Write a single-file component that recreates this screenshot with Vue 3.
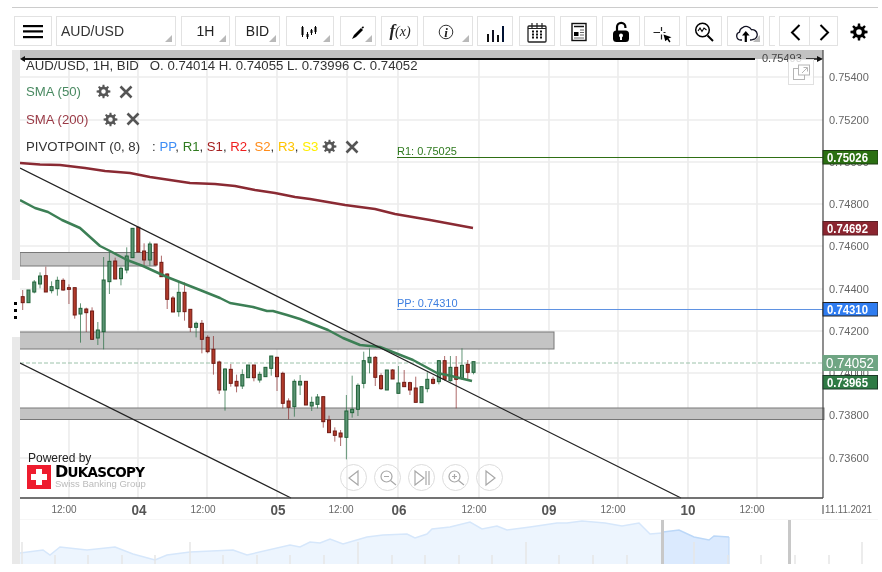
<script setup>
function gear(cx, cy, R, r, hole, teeth = 8) {
  let d = ''
  const step = (Math.PI * 2) / teeth
  for (let i = 0; i < teeth; i++) {
    const a = i * step
    const pts = [
      [a - step * 0.3, r],
      [a - step * 0.17, R],
      [a + step * 0.17, R],
      [a + step * 0.3, r]
    ]
    for (const [an, ra] of pts) {
      d += (d ? 'L' : 'M') + (cx + ra * Math.cos(an)).toFixed(2) + ' ' + (cy + ra * Math.sin(an)).toFixed(2)
    }
  }
  d += 'Z'
  d += `M${cx - hole} ${cy}a${hole} ${hole} 0 1 0 ${hole * 2} 0a${hole} ${hole} 0 1 0 ${-hole * 2} 0Z`
  return d
}
const gearIcon = gear(8, 8, 7.4, 5.2, 2.4)
const gearBig = gear(12, 13, 8.6, 6, 2.8)

const buttons = [
  { k: 'menu', w: 38, m: 0 },
  { k: 'sym', w: 120, m: 4, text: 'AUD/USD', drop: true },
  { k: 'tf', w: 49, m: 5, text: '1H', drop: true },
  { k: 'tf', w: 45, m: 5, text: 'BID', drop: true },
  { k: 'candles', w: 48, m: 6, drop: true },
  { k: 'pen', w: 36, m: 6, drop: true },
  { k: 'fx', w: 37, m: 5 },
  { k: 'info', w: 50, m: 5, drop: true },
  { k: 'bars', w: 36, m: 4 },
  { k: 'cal', w: 36, m: 6 },
  { k: 'news', w: 37, m: 5 },
  { k: 'lock', w: 38, m: 5 },
  { k: 'cross', w: 36, m: 4 },
  { k: 'search', w: 36, m: 6 },
  { k: 'cloud', w: 37, m: 5, drop: true },
  { k: 'stub', w: 6, m: 5 },
  { k: 'prev', w: 31, m: 4 },
  { k: 'next', w: 29, m: -1 }
]
const btnStyle = (b) => ({ width: b.w + 'px', marginLeft: b.m + 'px' })

const grid = [69, 138, 207, 277, 347, 398, 479, 549, 618, 688, 757]
const prices = [
  ['0.75400', 77], ['0.75200', 120], ['0.75000', 162], ['0.74800', 204], ['0.74600', 246],
  ['0.74400', 289], ['0.74200', 331], ['0.74000', 373], ['0.73800', 415], ['0.73600', 458]
]
const hours = [64, 203, 341, 474, 613, 752]
const days = [['04', 139], ['05', 278], ['06', 399], ['09', 549], ['10', 688]]

const groups = [
  [220, ['r 210 230 248 270', 'g 210 210 248 248', 'g 180 186 216 220', 'g 157 168 192 205', 'r 140 167 216 216', 'g 184 200 212 220', 'g 170 181 206 227', 'r 175 181 210 212', 'r 193 203 208 252', 'r 203 203 285 296', 'g 250 265 282 368', 'r 263 267 278 336', 'r 262 273 358 358', 'g 306 330 354 375', 'g 111 180 335 388', 'g 96 124 185 222', 'r 113 123 177 177', 'g 140 145 176 196', 'g 82 108 150 160', 'g 25 25 113 113', 'r 20 22 96 96', 'r 70 93 120 136', 'g 65 72 120 137', 'r 72 72 135 135', 'r 107 127 170 170', 'r 160 162 238 267', 'r 228 234 276 276', 'g 185 217 275 290', 'r 187 217 275 302', 'r 268 268 322 336', 'g 305 310 322 352', 'r 300 310 358 400', 'r 346 352 395 400', 'r 348 388 430 464', 'r 422 426 510 522', 'g 445 447 510 572', 'r 432 448 490 500', 'r 464 484 498 517', 'g 448 464 498 507', 'g 435 435 473 473', 'r 435 435 473 484']],
  [340, ['g 95 103 120 128', 'g 82 82 110 110', 'g 48 48 85 107', 'r 50 52 110 153', 'r 95 100 190 205', 'r 175 183 202 238', 'g 118 124 200 230', 'g 105 124 135 165', 'r 124 124 195 195', 'g 170 187 198 213', 'g 162 171 193 205', 'r 170 170 245 263', 'r 227 240 278 278', 'r 262 273 286 305', 'r 270 279 291 318', 'g 165 213 292 358', 'g 107 208 218 233', 'g 130 136 208 228', 'g 35 62 130 145', 'g 25 52 67 100', 'r 48 52 112 138', 'r 100 107 146 150', 'g 90 90 150 150', 'r 87 90 117 117', 'g 78 129 160 160', 'r 90 127 140 140', 'r 125 128 150 165', 'r 110 144 187 187', 'g 140 140 188 188', 'g 97 118 146 157', 'r 110 118 130 133', 'g 60 62 125 133', 'r 48 62 118 122', 'g 48 82 122 125', 'r 48 82 118 205', 'g 25 76 115 120', 'r 60 73 97 122', 'g 65 65 97 103']]
]
const candles = []
for (const [y0, rows] of groups) {
  for (const row of rows) {
    const [c, a, b, d, e] = row.split(' ')
    const n = candles.length
    candles.push({
      id: n,
      x: +(22.7 + 5.78 * n).toFixed(2),
      c,
      wt: y0 + a / 3,
      bt: y0 + b / 3,
      h: Math.max((d - b) / 3, 1),
      wb: y0 + e / 3
    })
  }
}

const sma50 = '20,200 35,208 48,212 62,220 80,228 100,246 110,251 127,260 143,266 167,277 200,290 220,298 230,303 253,307 267,311 273,311 287,315 300,319 328,330 343,338 360,345 380,347 413,360 437,373 447,375 472,381'
const sma200 = '20,163 40,164.500 60,165 85,168 105,171 130,173 150,177 170,180 190,183 215,184 235,186 255,190 275,193 295,197 310,199 345,205 375,209 395,214 430,220 473,228'

const navA = '20,553 43,550 50,555 60,547 87,550 115,547 133,554 155,560 167,555 190,552 233,550 247,555 290,545 300,547 310,542 320,543 330,539 343,544 367,537 383,535 407,534 415,538 427,534 432,529 450,527 470,522 482,529 497,526 507,530 530,527 557,523 567,523 582,521 605,523 622,526 639,523 650,534 662,533'
const navB = '663,532 679,530 694,537 709,540 714,536 729,537'
const volTicks = [
  [55, 555], [88, 555], [122, 555], [155, 555], [190, 542], [223, 555], [257, 555], [290, 555], [324, 555], [358, 542],
  [392, 555], [425, 555], [459, 555], [492, 555], [526, 542], [559, 555], [593, 555], [627, 555], [694, 542], [728, 555],
  [761, 555], [795, 555], [829, 555], [862, 542], [22, 542]
]
const series = [
  ['PP', 'pp'], ['R1', 'r1'], ['S1', 's1'], ['R2', 'r2'], ['S2', 's2'], ['R3', 'r3'], ['S3', 's3']
]
</script>

<template>
  <div class="page">
    <div class="topline"></div>
    <div class="toolbar">
      <div v-for="(b, i) in buttons" :key="i" class="btn" :class="{ drop: b.drop, noleft: b.k === 'next', sym: b.k === 'sym', stub: b.k === 'stub' }" :style="btnStyle(b)">
        <span v-if="b.text">{{ b.text }}</span>
        <svg v-else-if="b.k !== 'stub'" class="ico" viewBox="0 0 24 24" width="24" height="24">
          <g v-if="b.k === 'menu'" fill="#000">
            <rect x="2" y="6" width="20" height="2.2" />
            <rect x="2" y="11.3" width="20" height="2.2" />
            <rect x="2" y="17" width="20" height="2.2" />
          </g>
          <g v-else-if="b.k === 'candles'" stroke="#000" fill="#000">
            <path d="M4.500 7v11M9.500 13v7M13.500 10v6M17.500 7v8" stroke-width="1" />
            <rect x="3.500" y="8" width="2" height="8" stroke="none" />
            <rect x="8.500" y="15" width="2" height="3" stroke="none" />
            <rect x="12.500" y="11" width="2" height="3" stroke="none" />
            <rect x="16.500" y="8" width="2" height="5" stroke="none" />
          </g>
          <g v-else-if="b.k === 'pen'">
            <path d="M6 20l2-4 7-7 2 2-7 7z" fill="#000" />
            <path d="M15.500 8.500l1.500-1.200 1 1-1.200 1.500z" fill="#000" />
          </g>
          <text v-else-if="b.k === 'fx'" x="12" y="17" class="fx"><tspan class="fxf">f</tspan>(x)</text>
          <g v-else-if="b.k === 'info'">
            <circle cx="10" cy="13" r="6.800" fill="none" stroke="#333" stroke-width="1" />
            <text x="10" y="17.500" class="ii">i</text>
          </g>
          <g v-else-if="b.k === 'bars'">
            <rect x="4" y="15" width="2" height="8" fill="#111" />
            <rect x="9" y="11" width="2" height="12" fill="#112" />
            <rect x="14" y="16" width="2" height="7" fill="#111" />
            <rect x="19" y="7" width="2" height="16" fill="#013" />
          </g>
          <g v-else-if="b.k === 'cal'">
            <rect x="3" y="7" width="18" height="16" rx="1" fill="#fff" stroke="#222" stroke-width="1.300" />
            <path d="M3 9.500h18" stroke="#222" />
            <path d="M7 4v5M12 4v5M17 4v5" stroke="#222" stroke-width="1.200" />
            <path d="M7 12.500h10M7 15.500h10M7 18.500h10" stroke="#111" stroke-width="1.800" stroke-dasharray="2 2" />
          </g>
          <g v-else-if="b.k === 'news'">
            <rect x="5" y="4.500" width="14" height="17" fill="#fff" stroke="#111" stroke-width="1.400" />
            <path d="M7 7.500h10" stroke="#111" stroke-width="1.500" />
            <rect x="7" y="13" width="4.500" height="4" fill="#000" />
            <path d="M13 11h4M13 13.500h4M13 16h4M7 19h10" stroke="#666" stroke-width="1" />
          </g>
          <g v-else-if="b.k === 'lock'">
            <path d="M8 12V8a4.200 4.200 0 0 1 8.400 0v1" fill="none" stroke="#000" stroke-width="2.200" />
            <rect x="4" y="11.500" width="16" height="11.500" rx="3.500" fill="#000" />
            <circle cx="12" cy="16.500" r="2" fill="#fff" />
            <rect x="11" y="17" width="2" height="4" fill="#fff" />
          </g>
          <g v-else-if="b.k === 'cross'">
            <path d="M3.500 13.500h6.500M13.500 13.500h2M11.500 8v4M11.500 15.500v5" stroke="#222" stroke-width="1.200" fill="none" />
            <path d="M13.500 15.500l8 2.800-3 1.300 2 3-1.200.8-2-3-2 1.800z" fill="#000" />
          </g>
          <g v-else-if="b.k === 'search'" fill="none" stroke="#000">
            <circle cx="10.500" cy="11" r="6.800" stroke-width="1.500" />
            <path d="M15.500 16.500l5.500 5.500" stroke-width="2" />
            <path d="M6 12l2-3 2 3.500 2-3.500 2.500 2" stroke-width="1.100" />
          </g>
          <g v-else-if="b.k === 'cloud'">
            <path d="M8 21H6.500a4 4 0 0 1-1-7.800 5.500 5.500 0 0 1 3-4.500 6 6 0 0 1 9 2 4.800 4.800 0 0 1 1.500 9.800c-.8.400-1.800.500-3 .500" fill="none" stroke="#112" stroke-width="1.300" />
            <path d="M11.800 23v-8" stroke="#000" stroke-width="2.200" />
            <path d="M8 16.500l3.800-4.500 3.800 4.500z" fill="#000" />
          </g>
          <path v-else-if="b.k === 'prev'" d="M16.500 6L9 13.500 16.500 21" fill="none" stroke="#000" stroke-width="2" />
          <path v-else-if="b.k === 'next'" d="M8.500 6L16 13.500 8.500 21" fill="none" stroke="#000" stroke-width="2" />
        </svg>
      </div>
      <svg class="settings" viewBox="0 0 24 24" width="24" height="24"><path :d="gearBig" fill="#000" fill-rule="evenodd" /></svg>
    </div>

    <div class="workspace">
      <div class="strip">
        <div class="strip-seg"></div>
        <div class="dots"><i></i><i></i><i></i></div>
      </div>
      <div class="stage">
        <svg class="chart" viewBox="20 50 858 470" width="858" height="470">
          <g stroke="#ececec" stroke-width="1.600">
            <line v-for="x in grid" :key="x" :x1="x" :x2="x" y1="50" y2="498" />
            <line v-for="p in prices" :key="p[0]" x1="20" x2="823" :y1="p[1]" :y2="p[1]" />
          </g>

          <rect x="20" y="50" width="803" height="9" fill="#c2c2c2" />
          <rect x="20" y="252.500" width="136" height="13.500" class="zone" />
          <rect x="19" y="332" width="535" height="17" class="zone" />
          <rect x="19" y="408" width="805" height="11.500" class="zone" />

          <line x1="20" x2="823" y1="363" y2="363" stroke="#9cc2aa" stroke-dasharray="4 2" />

          <g class="candles">
            <g v-for="k in candles" :key="k.id" :class="k.c === 'g' ? 'up' : 'down'">
              <line :x1="k.x" :x2="k.x" :y1="k.wt" :y2="k.wb" class="wick" />
              <rect :x="k.x - 1.5" :y="k.bt" width="3" :height="k.h" class="body" />
            </g>
          </g>

          <polyline :points="sma200" class="ma" stroke="#8a2a33" />
          <polyline :points="sma50" class="ma" stroke="#3c7f55" />
          <line x1="20" y1="168" x2="681" y2="498" class="trend" />
          <line x1="20" y1="363" x2="291" y2="498" class="trend" />

          <line x1="397" x2="823" y1="157.500" y2="157.500" stroke="#2f6f14" stroke-width="1" />
          <line x1="397" x2="823" y1="309.500" y2="309.500" stroke="#5f92e2" stroke-width="1" />
          <text x="397" y="155" class="lvl r1t">R1: 0.75025</text>
          <text x="397" y="307" class="lvl ppt">PP: 0.74310</text>

          <line x1="22" x2="755" y1="59" y2="59" stroke="#111" stroke-width="2" />
          <path d="M20 59l5-3v6z" fill="#111" />
          <text x="762" y="62" class="tl top">0.75493</text>
          <line x1="806" x2="818" y1="59" y2="59" stroke="#111" stroke-width="1.500" />
          <path d="M823 59l-6-3v6z" fill="#111" />

          <rect x="788.500" y="59.500" width="25" height="25" fill="#fff" fill-opacity=".8" stroke="#e0e0e0" />
          <g fill="#fff" stroke="#b5b5b5">
            <rect x="793.500" y="68.500" width="11" height="11" />
            <rect x="798.500" y="65" width="11" height="10" />
          </g>
          <path d="M802 73l5-5M803.500 67.500h4v4" fill="none" stroke="#b5b5b5" />

          <line x1="823" x2="823" y1="50" y2="498" stroke="#444" stroke-width="1.200" />
          <line x1="20" x2="823" y1="498" y2="498" stroke="#444" stroke-width="1.400" />
          <line x1="20" x2="878" y1="520" y2="520" stroke="#ececec" />
          <line x1="823" x2="878" y1="49.500" y2="49.500" stroke="#ddd" />

          <text v-for="p in prices" :key="'t' + p[0]" x="829" :y="p[1] + 4" class="tl">{{ p[0] }}</text>

          <g class="mark">
            <rect x="823" y="150.500" width="55" height="13.500" fill="#2b6f12" stroke="#1d3a12" />
            <text x="827" y="161.500" textLength="41" lengthAdjust="spacingAndGlyphs">0.75026</text>
            <rect x="823" y="221.500" width="55" height="13.500" fill="#8b2530" stroke="#5a2026" />
            <text x="827" y="232.500" textLength="41" lengthAdjust="spacingAndGlyphs">0.74692</text>
            <rect x="823" y="302.500" width="55" height="13.500" fill="#2f7cf0" stroke="#222" />
            <text x="827" y="313.500" textLength="41" lengthAdjust="spacingAndGlyphs">0.74310</text>
            <rect x="822.500" y="355" width="55.500" height="16" fill="#6fa583" />
            <text x="826" y="368" class="big" textLength="48" lengthAdjust="spacingAndGlyphs">0.74052</text>
            <rect x="823" y="375.500" width="54.500" height="13.500" fill="#2f7a45" stroke="#1d3a28" />
            <text x="827" y="386.500" textLength="41" lengthAdjust="spacingAndGlyphs">0.73965</text>
          </g>

          <text v-for="h in hours" :key="h" :x="h" y="513" class="hr">12:00</text>
          <text v-for="d in days" :key="d[0]" :x="d[1]" y="514.500" class="day" textLength="15" lengthAdjust="spacingAndGlyphs">{{ d[0] }}</text>
          <line x1="823" x2="823" y1="505" y2="514" stroke="#444" />
          <text x="825" y="513" class="date" textLength="47" lengthAdjust="spacingAndGlyphs">11.11.2021</text>
        </svg>

        <div class="legend">
          <div class="row first">
            <span>AUD/USD, 1H, BID</span><span class="ohlc">O. 0.74014 H. 0.74055 L. 0.73996 C. 0.74052</span>
          </div>
          <div class="row sma50">
            <span>SMA (50)</span>
            <svg class="g1" viewBox="0 0 16 16" width="15" height="15"><path :d="gearIcon" fill-rule="evenodd" /></svg>
            <svg class="x1" viewBox="0 0 14 14" width="14" height="14"><path d="M1.500 1.500l11 11M12.500 1.500l-11 11" /></svg>
          </div>
          <div class="row sma200">
            <span>SMA (200)</span>
            <svg class="g1" viewBox="0 0 16 16" width="15" height="15"><path :d="gearIcon" fill-rule="evenodd" /></svg>
            <svg class="x1" viewBox="0 0 14 14" width="14" height="14"><path d="M1.500 1.500l11 11M12.500 1.500l-11 11" /></svg>
          </div>
          <div class="row pivot">
            <span>PIVOTPOINT (0, 8)</span>
            <span class="pts">: <template v-for="(s, i) in series" :key="s[0]"><span :class="s[1]">{{ s[0] }}</span><template v-if="i < 6">, </template></template></span>
            <svg class="g2" viewBox="0 0 16 16" width="15" height="15"><path :d="gearIcon" fill-rule="evenodd" /></svg>
            <svg class="x1" viewBox="0 0 14 14" width="14" height="14"><path d="M1.500 1.500l11 11M12.500 1.500l-11 11" /></svg>
          </div>
        </div>

        <div class="brand">
          <div class="powered">Powered by</div>
          <div class="logo">
            <div class="flag"><i></i><b></b></div>
            <div class="wordmark">
              <div class="duka"><span class="bigd">D</span>UKASCOPY</div>
              <div class="swiss">Swiss Banking Group</div>
            </div>
          </div>
        </div>

        <div class="controls">
          <div class="round"><svg viewBox="0 0 24 24" width="24" height="24"><path d="M16 5v14L7 12z" /></svg></div>
          <div class="round"><svg viewBox="0 0 24 24" width="24" height="24"><circle cx="10.500" cy="10.500" r="5.500" /><path d="M8 10.500h5M14.500 14.500l5.500 4.500" /></svg></div>
          <div class="round"><svg viewBox="0 0 24 24" width="24" height="24"><path d="M5 5v14l9-7zM16 5v14M19 5v14" /></svg></div>
          <div class="round"><svg viewBox="0 0 24 24" width="24" height="24"><circle cx="10.500" cy="10.500" r="5.500" /><path d="M8 10.500h5M10.500 8v5M14.500 14.500l5.500 4.500" /></svg></div>
          <div class="round"><svg viewBox="0 0 24 24" width="24" height="24"><path d="M8 5v14l9-7z" /></svg></div>
        </div>

        <svg class="nav" viewBox="20 520 858 44" width="858" height="44">
          <polygon :points="navA + ' 662,564 20,564'" fill="#edf5fe" />
          <polyline :points="navA" fill="none" stroke="#d6e7fb" stroke-width="1.500" />
          <polygon :points="navB + ' 729,564 663,564'" fill="#dbeafe" />
          <polyline :points="navB" fill="none" stroke="#bcd8f8" stroke-width="1.500" />
          <line x1="729" x2="729" y1="537" y2="564" stroke="#bcd8f8" />
          <line v-for="t in volTicks" :key="t[0]" :x1="t[0]" :x2="t[0]" :y1="t[1]" y2="564" stroke="#e6e6e6" stroke-width="1.500" />
          <rect x="661" y="520" width="3" height="44" fill="#c8c8c8" />
          <rect x="788" y="520" width="3" height="44" fill="#c8c8c8" />
        </svg>
      </div>
    </div>
  </div>
</template>

<style>
html, body { margin: 0; background: #fff; }
</style>

<style scoped>
.page {
  width: 882px;
  height: 572px;
  padding-top: 7px;
  box-sizing: border-box;
  overflow: hidden;
  background: #fff;
  font-family: "Liberation Sans", Arial, sans-serif;
  filter: blur(0.3px);
}
.topline { height: 1px; margin: 0 4px 0 12px; background: #ccc; }
.toolbar { display: flex; height: 30px; margin-top: 8px; padding-left: 14px; }
.btn {
  position: relative;
  box-sizing: border-box;
  height: 30px;
  border: 1px solid #e2e2e2;
  display: flex;
  align-items: center;
  justify-content: center;
  font-size: 14px;
  color: #222;
  background: #fff;
}
.btn.sym { justify-content: flex-start; padding-left: 4px; color: #333; }
.btn.stub { border-right: 0; }
.btn.noleft { border-left: 1px solid #e2e2e2; }
.btn.drop::after {
  content: "";
  position: absolute;
  right: 3px;
  bottom: 3px;
  border-style: solid;
  border-width: 0 0 7px 7px;
  border-color: transparent transparent #b9b9b9 transparent;
}
.ico { display: block; }
.settings { margin-left: 9px; align-self: center; }
.fx { font: 400 14px "Liberation Serif", serif; font-style: italic; text-anchor: middle; fill: #222; }
.fxf { font-size: 17px; font-weight: 700; }
.ii { font: italic 700 13px "Liberation Serif", serif; text-anchor: middle; fill: #222; }

.workspace { display: grid; grid-template-columns: 8px 858px; margin: 4px 0 0 12px; }
.strip { position: relative; height: 514px; background: #e9e9e9; }
.strip-seg { position: absolute; left: 0; right: 0; top: 230px; height: 57px; background: #fff; }
.dots { position: absolute; left: 2px; top: 252px; display: flex; flex-direction: column; gap: 4px; }
.dots i { display: block; width: 3px; height: 3px; background: #000; }

.stage { position: relative; width: 858px; }
.chart, .nav { display: block; }
.zone { fill: #c4c4c4; stroke: #787878; stroke-width: 1; }
.wick { stroke-width: 1; }
.up .wick { stroke: #2f7349; stroke-opacity: .75; }
.down .wick { stroke: #8a2a2a; stroke-opacity: .7; }
.up .body { fill: #5b9373; stroke: #1f6238; }
.down .body { fill: #b23b2b; stroke: #701a14; }
.ma { fill: none; stroke-width: 2.500; stroke-linejoin: round; }
.trend { stroke: #222; stroke-width: 1.300; }
.lvl { font-size: 11px; }
.r1t { fill: #2f7a1f; }
.ppt { fill: #3e7fe0; }
.tl { font-size: 11px; fill: #666; }
.top { fill: #444; }
.mark text { font-size: 12px; font-weight: 700; fill: #fff; }
.mark text.big { font-size: 14.500px; font-weight: 400; }
.hr { font-size: 10px; fill: #666; text-anchor: middle; }
.day { font-size: 15px; font-weight: 700; fill: #555; text-anchor: middle; }
.date { font-size: 10px; fill: #666; }

.legend { position: absolute; left: 6px; top: 3px; font-size: 13.200px; color: #333; }
.row { display: flex; align-items: center; white-space: pre; height: 27.500px; }
.row.first { height: 25px; }
.ohlc { margin-left: 11px; }
.sma50 { color: #4a8a62; }
.sma200 { color: #9a3a46; }
.g1 { margin-left: 15px; fill: #555; }
.g2 { margin-left: 4px; fill: #555; }
.x1 { margin-left: 8px; fill: none; stroke: #555; stroke-width: 2.600; }
.pts { margin-left: 12px; }
.pp { color: #3f8ef5; }
.r1 { color: #2f7a1f; }
.s1 { color: #a52020; }
.r2 { color: #f02020; }
.s2 { color: #ff8c1a; }
.r3 { color: #ffc400; }
.s3 { color: #ffee00; }

.brand { position: absolute; left: 7px; top: 401px; }
.powered { font-size: 12px; line-height: 14px; color: #222; padding-left: 1px; }
.logo { display: flex; align-items: flex-start; gap: 4px; }
.flag { position: relative; width: 24px; height: 24px; background: #ee1c2e; }
.flag i { position: absolute; left: 9px; top: 4px; width: 6px; height: 16px; background: #fff; }
.flag b { position: absolute; left: 4px; top: 9px; width: 16px; height: 6px; background: #fff; }
.duka { font: 700 13.500px/14px "DejaVu Sans", sans-serif; color: #000; white-space: nowrap; letter-spacing: -.75px; }
.bigd { font-size: 16px; }
.swiss { font-size: 9.500px; line-height: 10px; color: #bbb; white-space: nowrap; }

.controls { position: absolute; left: 320px; top: 414px; display: flex; gap: 7px; }
.round {
  box-sizing: border-box;
  width: 27px;
  height: 27px;
  border: 1px solid #ddd;
  border-radius: 50%;
  display: flex;
  align-items: center;
  justify-content: center;
}
.round svg { fill: none; stroke: #a8a8a8; stroke-width: 1.200; }
</style>
